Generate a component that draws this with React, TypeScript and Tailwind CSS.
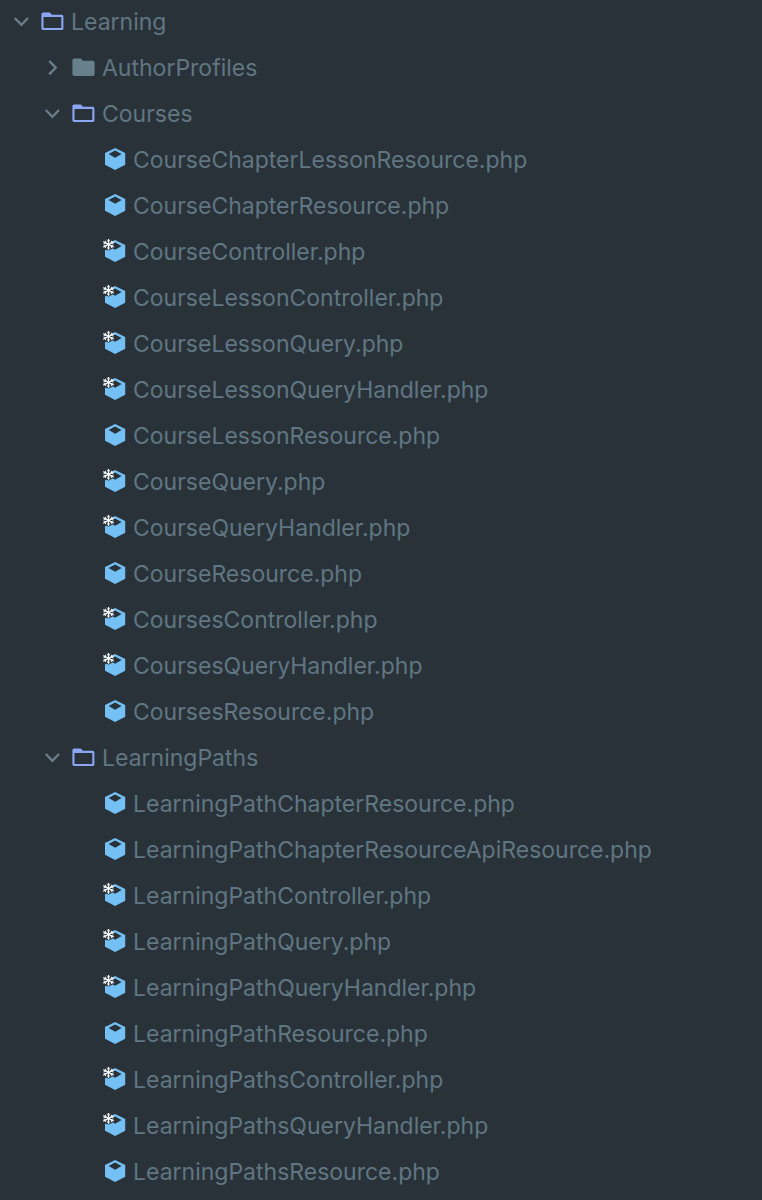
import React, { useState } from 'react';

type TreeNode = {
  name: string;
  kind: 'folder' | 'class' | 'final';
  open?: boolean;
  children?: TreeNode[];
};

const tree: TreeNode = {
  name: 'Learning',
  kind: 'folder',
  open: true,
  children: [
    { name: 'AuthorProfiles', kind: 'folder', open: false, children: [] },
    {
      name: 'Courses',
      kind: 'folder',
      open: true,
      children: [
        { name: 'CourseChapterLessonResource.php', kind: 'class' },
        { name: 'CourseChapterResource.php', kind: 'class' },
        { name: 'CourseController.php', kind: 'final' },
        { name: 'CourseLessonController.php', kind: 'final' },
        { name: 'CourseLessonQuery.php', kind: 'final' },
        { name: 'CourseLessonQueryHandler.php', kind: 'final' },
        { name: 'CourseLessonResource.php', kind: 'class' },
        { name: 'CourseQuery.php', kind: 'final' },
        { name: 'CourseQueryHandler.php', kind: 'final' },
        { name: 'CourseResource.php', kind: 'class' },
        { name: 'CoursesController.php', kind: 'final' },
        { name: 'CoursesQueryHandler.php', kind: 'final' },
        { name: 'CoursesResource.php', kind: 'class' },
      ],
    },
    {
      name: 'LearningPaths',
      kind: 'folder',
      open: true,
      children: [
        { name: 'LearningPathChapterResource.php', kind: 'class' },
        { name: 'LearningPathChapterResourceApiResource.php', kind: 'class' },
        { name: 'LearningPathController.php', kind: 'final' },
        { name: 'LearningPathQuery.php', kind: 'final' },
        { name: 'LearningPathQueryHandler.php', kind: 'final' },
        { name: 'LearningPathResource.php', kind: 'class' },
        { name: 'LearningPathsController.php', kind: 'final' },
        { name: 'LearningPathsQueryHandler.php', kind: 'final' },
        { name: 'LearningPathsResource.php', kind: 'class' },
      ],
    },
  ],
};

const Chevron = ({ open }: { open: boolean }) => (
  <svg className="w-6 h-6 shrink-0" viewBox="0 0 24 24" fill="none" stroke="#6b7f8a" strokeWidth="2.3">
    {open ? <path d="M4.8 8l6.6 6.8L18 8" /> : <path d="M8.2 5l6.6 6.6-6.6 6.8" />}
  </svg>
);

const FolderIcon = ({ open }: { open: boolean }) => (
  <svg className="w-6 h-6 shrink-0" viewBox="0 0 24 24">
    {open ? (
      <path
        fill="#8ba6f5"
        fillRule="evenodd"
        d="M2.2 2.5h6.6l2.2 2.3h9.8a1.6 1.6 0 0 1 1.6 1.6v12a1.6 1.6 0 0 1-1.6 1.6H2.2a1.8 1.8 0 0 1-1.8-1.8V4.3a1.8 1.8 0 0 1 1.8-1.8zM2.5 6.9v11h17.8v-11z"
      />
    ) : (
      <path
        fill="#68808c"
        d="M2.4 2.5h6.4l2.2 2.3h9.6a2 2 0 0 1 2 2v11.2a2 2 0 0 1-2 2H2.4a2 2 0 0 1-2-2V4.5a2 2 0 0 1 2-2z"
      />
    )}
  </svg>
);

const ClassIcon = ({ final }: { final: boolean }) => (
  <svg className="w-6 h-6 shrink-0 overflow-visible" viewBox="0 0 24 24">
    <path
      fill="#74c0f5"
      fillRule="evenodd"
      d="M12.1.1l10.1 5v11.6l-10.1 5.4L2 16.7V5.1zM12.1 2.6L5.6 6l6.5 3.7L18.6 6z"
    />
    {/* snowflake marks a final class */}
    {final && (
      <>
        <path fill="#293238" d="M0-1h9.4v3.2l2.4 2.4-2.2 4L6 10.4 0 9.4z" />
        <g stroke="#f4f8fa" strokeWidth="1.3" fill="none">
          <path d="M5.5-1v10.8M.3 1.7l10.4 5.4M.3 7.1l10.4-5.4" />
          <path strokeWidth="0.9" d="M3.8.2l1.7 1.5L7.2.2M3.8 8.6l1.7-1.5 1.7 1.5M.6 3.8l2.3-.6L2.4.8M10.4 5l-2.3.6.5 2.4M.6 5l2.3.6L2.4 8M10.4 3.8l-2.3-.6.5-2.4" />
        </g>
      </>
    )}
  </svg>
);

const rowClass = 'flex items-center w-full h-11 gap-[7px] text-left whitespace-nowrap';

const TreeItem = ({ node }: { node: TreeNode }) => {
  const [open, setOpen] = useState(!!node.open);

  if (node.kind !== 'folder') {
    return (
      <li className={rowClass}>
        <span className="w-6 shrink-0" />
        <span className="flex items-center gap-1.5">
          <ClassIcon final={node.kind === 'final'} />
          {node.name}
        </span>
      </li>
    );
  }

  return (
    <li className="flex flex-col gap-0.5">
      <button type="button" aria-expanded={open} onClick={() => setOpen(!open)} className={rowClass}>
        <Chevron open={open} />
        <span className="flex items-center gap-1.5">
          <FolderIcon open={open} />
          {node.name}
        </span>
      </button>
      {open && !!node.children?.length && (
        <ul className="flex flex-col gap-0.5 pl-[31px]">
          {node.children.map((child) => (
            <TreeItem key={child.name} node={child} />
          ))}
        </ul>
      )}
    </li>
  );
};

export default function App() {
  return (
    <div className="min-h-screen overflow-hidden bg-[#293238] text-[#607682] font-['Inter',sans-serif] text-[23px] leading-8">
      <ul className="pl-[10px]">
        <TreeItem node={tree} />
      </ul>
    </div>
  );
}
